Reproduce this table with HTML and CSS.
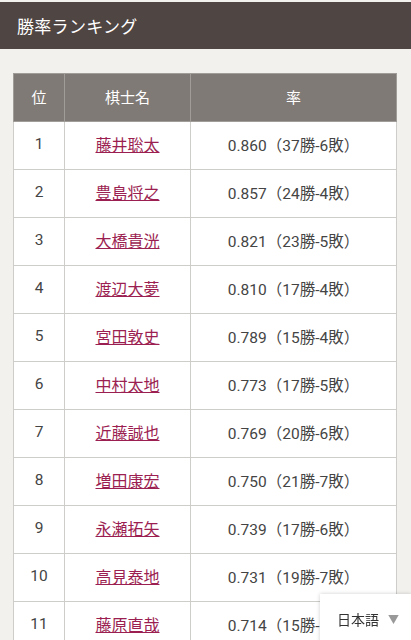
FILE: index.html
```html
<!DOCTYPE html>
<html lang="ja">
<head>
<meta charset="utf-8">
<link rel="stylesheet" href="styles.css">
</head>
<body>
<header class="bar"><h1 class="title">勝率ランキング</h1></header>
<main class="content">
<table class="rank">
<thead>
<tr><th class="c-pos">位</th><th class="c-name">棋士名</th><th class="c-rate">率</th></tr>
</thead>
<tbody>
<tr><td>1</td><td><a href="#">藤井聡太</a></td><td>0.860（37勝-6敗）</td></tr>
<tr><td>2</td><td><a href="#">豊島将之</a></td><td>0.857（24勝-4敗）</td></tr>
<tr><td>3</td><td><a href="#">大橋貴洸</a></td><td>0.821（23勝-5敗）</td></tr>
<tr><td>4</td><td><a href="#">渡辺大夢</a></td><td>0.810（17勝-4敗）</td></tr>
<tr><td>5</td><td><a href="#">宮田敦史</a></td><td>0.789（15勝-4敗）</td></tr>
<tr><td>6</td><td><a href="#">中村太地</a></td><td>0.773（17勝-5敗）</td></tr>
<tr><td>7</td><td><a href="#">近藤誠也</a></td><td>0.769（20勝-6敗）</td></tr>
<tr><td>8</td><td><a href="#">増田康宏</a></td><td>0.750（21勝-7敗）</td></tr>
<tr><td>9</td><td><a href="#">永瀬拓矢</a></td><td>0.739（17勝-6敗）</td></tr>
<tr><td>10</td><td><a href="#">高見泰地</a></td><td>0.731（19勝-7敗）</td></tr>
<tr><td>11</td><td><a href="#">藤原直哉</a></td><td>0.714（15勝-6敗）</td></tr>
</tbody>
</table>
</main>
<div class="lang">日本語<span class="arrow">▼</span></div>
</body>
</html>
```
FILE: styles.css
```css
html, body {
  margin: 0;
  padding: 0;
}
body {
  background: #f2f1ed;
  font-family: Roboto, "Noto Sans CJK JP", sans-serif;
  color: #444;
  padding-top: 2px;
}
.bar {
  background: #4f4542;
  height: 47px;
  display: flex;
  align-items: center;
  padding-left: 17px;
}
.title {
  margin: 0;
  color: #fff;
  font-size: 17px;
  font-weight: normal;
  font-family: "Noto Sans CJK JP", sans-serif;
  letter-spacing: 0.3px;
}
.content {
  padding: 24px 15px 0 13px;
}
.rank {
  width: 384px;
  border-collapse: collapse;
  table-layout: fixed;
  background: #fff;
  font-size: 15.5px;
}
.rank th, .rank td {
  border: 1px solid #cfcdca;
  height: 44px;
  padding: 0 0 3px;
  text-align: center;
  vertical-align: middle;
}
.rank th {
  background: #7f7a75;
  color: #fff;
  font-weight: normal;
  font-family: "Noto Sans CJK JP", sans-serif;
  font-size: 15px;
  border-color: #a09c98;
  height: 45px;
  padding-bottom: 2px;
}
.c-pos { width: 50px; }
.c-name { width: 125px; }
.rank a {
  color: #9c1f52;
  text-decoration: underline;
  font-family: "Noto Sans CJK JP", sans-serif;
  font-size: 16px;
}
.lang {
  position: fixed;
  right: 0;
  bottom: -4px;
  width: 91px;
  height: 50px;
  background: #fff;
  box-shadow: 0 0 4px rgba(0,0,0,0.2);
  display: flex;
  align-items: center;
  justify-content: flex-end;
  padding-right: 12px;
  box-sizing: border-box;
  font-family: "Noto Sans CJK JP", sans-serif;
  font-size: 14px;
  color: #333;
}
.arrow {
  color: #999;
  font-size: 11px;
  margin-left: 9px;
}
```
